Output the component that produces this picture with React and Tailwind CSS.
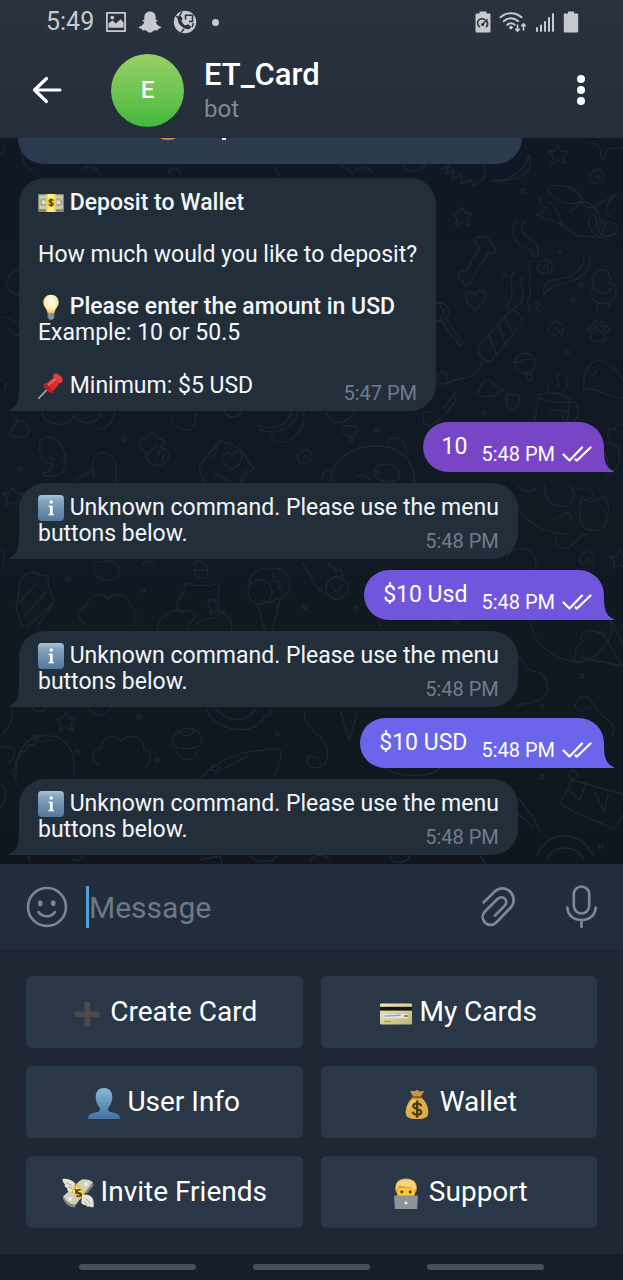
import React from "react";

/* ---------- Status bar icons ---------- */

function PictureIcon() {
  return (
    <svg viewBox="0 0 22 22" className="size-[22px]" aria-hidden="true">
      <path fillRule="evenodd" fill="#c6c9cd" d="M2 1h18a1 1 0 0 1 1 1v18a1 1 0 0 1-1 1H2a1 1 0 0 1-1-1V2a1 1 0 0 1 1-1Zm.8 1.8v16.4h16.4V2.8Z" />
      <path fill="#c6c9cd" d="M3.500 16.800V12.600l3.800-3 3.700 3 4.600-4.300 3 3.200v5.300Z" />
      <circle cx="7.300" cy="6.600" r="1.900" fill="#c6c9cd" />
    </svg>
  );
}

function GhostIcon() {
  return (
    <svg viewBox="0 0 24 22" className="h-[22px] w-6" aria-hidden="true">
      <path fill="#c6c9cd" d="M12 .4c3.600 0 5.700 2.600 5.700 5.900v2.500c.7.3 1.500-.2 1.800.4.4.8-.9 1.500-1.800 1.900.6 2.300 2.600 4.100 5 4.700.8.3.4 1.200-.3 1.500-1 .5-1.900.4-2.200.8-.3.500-.1 1.200-.7 1.300-1 .1-2-.3-3.200 0-1.500.500-2.400 2.200-4.300 2.200s-2.800-1.700-4.300-2.200c-1.200-.3-2.200.1-3.200 0-.6-.1-.4-.8-.7-1.300-.3-.4-1.200-.3-2.200-.8-.7-.3-1.100-1.200-.3-1.500 2.400-.6 4.400-2.400 5-4.700-.9-.4-2.200-1.100-1.800-1.900.3-.6 1.100-.1 1.800-.4V6.300C6.300 3 8.400.4 12 .4Z" />
    </svg>
  );
}

function CallBrowserIcon() {
  return (
    <svg viewBox="0 0 24 24" className="size-6" aria-hidden="true">
      <circle cx="12" cy="12" r="11.200" fill="#c6c9cd" />
      <path d="M9 1.500 6.800 5.500M3 6l2 2M8 22.500l3-3.500M20.500 13l-1.500 4" stroke="#29313f" strokeWidth="1.400" fill="none" />
      <path fill="none" stroke="#29313f" strokeWidth="1.500" strokeLinejoin="round" d="M12.500 9.500V5.200h7v6.300h-3.500" />
      <path fill="#29313f" d="M7 5 9.600 8.800 8.300 11c.8 1.900 2.300 3.500 4.200 4.500l2.300-1.300 3.500 2.600c-.6 1.600-2 2.600-3.700 2.400C9.300 18.600 4.700 13.500 4.600 8.500 4.700 6.900 5.500 5.600 7 5Z" />
    </svg>
  );
}

function PowerSaveIcon() {
  return (
    <svg viewBox="0 0 16 22" className="h-[22px] w-4" aria-hidden="true">
      <path fill="#c6c9cd" d="M4.500.5h7v2h3a1 1 0 0 1 1 1V20.500a1 1 0 0 1-1 1h-13a1 1 0 0 1-1-1V3.500a1 1 0 0 1 1-1h3Z" />
      <path fill="none" stroke="#29313f" strokeWidth="1.500" strokeLinecap="round" d="M4.500 15.800A4.300 4.300 0 0 1 9.500 8.500M12 10.500a4.300 4.300 0 0 1-.6 5.300M7.800 13.200 12 8.600" />
      <circle cx="7.700" cy="13.400" r="1.500" fill="#29313f" />
    </svg>
  );
}

function WifiIcon() {
  return (
    <svg viewBox="0 0 28 22" className="h-[22px] w-7" aria-hidden="true">
      <g fill="none" stroke="#c6c9cd" strokeWidth="2" strokeLinecap="round">
        <path d="M1.500 6.300C7.500.8 16.500.8 22.500 6.300M4.800 10.200c4.300-4 10-4 14.400 0M8.300 13.800c2.300-2 5-2 7.300 0" />
      </g>
      <circle cx="12" cy="16.600" r="1.800" fill="#c6c9cd" />
      <path fill="none" stroke="#c6c9cd" strokeWidth="1.700" d="M18.500 13.500v6.500M16.300 17.800l2.200 2.400 2.200-2.400M24.500 19.500V13M22.300 15.300l2.200-2.400 2.200 2.400" />
    </svg>
  );
}

function SignalIcon() {
  return (
    <svg viewBox="0 0 20 22" className="h-[22px] w-5" aria-hidden="true">
      <path fill="none" stroke="#c6c9cd" strokeWidth="2" strokeLinecap="round" d="M2 20v-3M6 20v-5.500M10 20v-9M14 20V7M18 20V3" />
    </svg>
  );
}

function BatteryIcon() {
  return (
    <svg viewBox="0 0 16 22" className="h-[22px] w-4" aria-hidden="true">
      <path fill="#c6c9cd" d="M5 .5h6v2h3.200a1 1 0 0 1 1 1V20.500a1 1 0 0 1-1 1H1.800a1 1 0 0 1-1-1V3.500a1 1 0 0 1 1-1H5Z" />
    </svg>
  );
}

/* ---------- Emoji ---------- */

function Emoji({ label, className, children }) {
  return (
    <svg viewBox="0 0 32 32" role="img" aria-label={label} className={className}>
      {children}
    </svg>
  );
}

const INLINE = "inline-block size-[26px] align-text-bottom";
const KEY = "mt-1 size-8 shrink-0";

function BanknoteEmoji() {
  return (
    <Emoji label="Dollar banknote" className={INLINE}>
      <rect x="0" y="5" width="32" height="22" rx="1" fill="#7f8a70" />
      <rect x="1.500" y="6.500" width="29" height="17" fill="#c9cdb4" />
      <circle cx="7" cy="15" r="5" fill="#a5ab90" />
      <circle cx="25" cy="15" r="5" fill="#a5ab90" />
      <circle cx="7" cy="15" r="2.500" fill="#dfe1d0" />
      <circle cx="25" cy="15" r="2.500" fill="#dfe1d0" />
      <rect x="10" y="5" width="12" height="22" fill="#f3d55b" />
      <rect x="12.500" y="5" width="7" height="22" fill="#fdeb95" />
      <circle cx="16" cy="15.500" r="5" fill="#f5c832" />
      <path d="M18.800 12.800c-.5-1.200-5-1.600-5 .7 0 2.400 5 1.500 5 4 0 2.300-4.700 2-5.500.4M16.200 10v11" fill="none" stroke="#4e4320" strokeWidth="1.500" />
    </Emoji>
  );
}

function BulbEmoji() {
  return (
    <Emoji label="Light bulb" className={INLINE}>
      <defs>
        <radialGradient id="bulb" cx=".5" cy=".4" r=".6">
          <stop offset="0" stopColor="#fffdf0" />
          <stop offset=".6" stopColor="#fdf0b4" />
          <stop offset="1" stopColor="#efc95e" />
        </radialGradient>
      </defs>
      <path fill="url(#bulb)" d="M16 1c5.700 0 9.500 4.200 9.500 9.300 0 5.400-4.500 7.700-5.200 13.200h-8.600C11 18 6.500 15.700 6.500 10.300 6.500 5.200 10.300 1 16 1Z" />
      <path fill="#9aa1a6" d="M12 23h8v6l-2 2.500h-4L12 29Z" />
      <path stroke="#666d73" strokeWidth="1" d="M12 25.500h8M12 28.200h8" />
    </Emoji>
  );
}

function PinEmoji() {
  return (
    <Emoji label="Pushpin" className={INLINE}>
      <path d="M13 18.500 1 31" stroke="#aeb4ba" strokeWidth="1.800" strokeLinecap="round" />
      <path fill="#b71f22" d="M6.500 13.500c3.500-2 7-1.200 9.500 1.400 2.600 2.600 3.500 6 1.500 9.600-2 1-4.700-1.200-7-3.500s-5-5-4-7.500Z" />
      <path fill="#d32f2f" d="m10.500 13 8.500-7.500 7.500 7.500-7.500 9Z" />
      <path fill="#e23d3b" d="M19.500 1.500c2.500-2 5.500-.5 8 2s4 5.500 2 8c-2 1.500-5.300.3-8-2.300-2.600-2.600-3.700-5.700-2-7.700Z" />
      <path d="m13 14.500 8-7" stroke="#f27570" strokeWidth="1.800" strokeLinecap="round" />
    </Emoji>
  );
}

function InfoEmoji() {
  return (
    <Emoji label="Information" className={INLINE}>
      <defs>
        <linearGradient id="info" x1="0" y1="0" x2="0" y2="1">
          <stop offset="0" stopColor="#a9c5da" />
          <stop offset=".2" stopColor="#86a6c0" />
          <stop offset="1" stopColor="#53779b" />
        </linearGradient>
      </defs>
      <rect x="0" y="0" width="32" height="32" rx="4.500" fill="url(#info)" />
      <circle cx="16.300" cy="8.700" r="2.200" fill="#fff" />
      <path fill="#fff" d="M13 13.300h5v10.200h1.800V25h-7v-1.500h1.900v-8.700H13Z" />
    </Emoji>
  );
}

function PlusEmoji() {
  return (
    <Emoji label="Plus" className={KEY}>
      <path fill="#4a4a49" d="M13.500 4h5.500v9.500h9.500V19H19v9.500h-5.500V19H4v-5.500h9.500Z" />
    </Emoji>
  );
}

function CardEmoji() {
  return (
    <Emoji label="Credit card" className={KEY}>
      <defs>
        <linearGradient id="card" x1="0" y1="0" x2="1" y2="1">
          <stop offset="0" stopColor="#f0e9b8" />
          <stop offset="1" stopColor="#bdb477" />
        </linearGradient>
      </defs>
      <rect x="0" y="5.500" width="32" height="21" rx="1.200" fill="url(#card)" />
      <rect x="0" y="8.800" width="32" height="3.800" fill="#15140f" />
      <rect x="3" y="16" width="25" height="4.200" fill="#e3e6e2" />
      <path d="M4 18.500c1.200-2 2 1 3.200-.5s2 1.200 3.200-.2 2 1 3.200-.2 2 1 3.200-.3 2.200.8 4 0" fill="none" stroke="#7fa3c8" strokeWidth="1.200" />
      <path d="M24 18h4" stroke="#8a3f3f" strokeWidth="1.300" />
      <path d="M4 23.500h7" stroke="#9b9560" strokeWidth="1" />
    </Emoji>
  );
}

function PersonEmoji() {
  return (
    <Emoji label="Person" className={KEY}>
      <defs>
        <linearGradient id="person" x1="0" y1="0" x2="0" y2="1">
          <stop offset="0" stopColor="#8cb8d8" />
          <stop offset="1" stopColor="#3f73a3" />
        </linearGradient>
      </defs>
      <path fill="url(#person)" d="M16 0c5 0 8.300 3.400 8.300 8.800 0 4.500-1.500 8.700-4 10.600v3.300c1.500 1.700 6.400 1.700 9.300 3.300 1.700 1 2.400 2.700 2.400 5H0c0-2.300.7-4 2.400-5 2.900-1.600 7.800-1.600 9.300-3.300v-3.300c-2.500-1.900-4-6.100-4-10.600C7.700 3.400 11 0 16 0Z" />
    </Emoji>
  );
}

function MoneyBagEmoji() {
  return (
    <Emoji label="Money bag" className={KEY}>
      <path fill="#c9973f" d="M9 3.500c2-2 3.500.8 5-.5s2.500-1.500 4 0 3.500-1 5 .5l-4 6h-6Z" />
      <path fill="#dcae45" d="M12.500 9h7c4.500 3 7.800 9 7.800 15 0 5.500-3 7-11.300 7S4.700 29.500 4.700 24c0-6 3.300-12 7.800-15Z" />
      <path fill="#efcf76" d="M12 11.500c-3 3-4.800 7-5 12 2-6 4.500-9 8-11Z" />
      <path stroke="#8a5a24" strokeWidth="2" strokeLinecap="round" d="M11.500 9.200h9" />
      <path d="M20 17.300c-1-2.500-7.700-2.700-7.700.8 0 3.700 8 2.200 8 6 0 3.500-7 3.500-8.300.5M16.200 13.300V29" fill="none" stroke="#453313" strokeWidth="2.100" strokeLinecap="round" />
    </Emoji>
  );
}

function FlyingMoneyEmoji() {
  return (
    <Emoji label="Money with wings" className={KEY}>
      <path fill="#cfd0bd" d="m1 18.500 17-16c4-2 9-1.500 13 2L13.500 27C8 27 4 23.500 1 18.500Z" />
      <path fill="#87886f" d="M1 18.500c3 5 7 8.500 12.500 8.500l-.5 2.500C8 29.500 3 26 1 21ZM31 4.500l.5 3L25 15.500l-1.500-1.300Z" />
      <path fill="#f0c43c" d="m8.500 12.500 6.500-6.500 8.500 8.500-6 7.500Z" />
      <path fill="#f8e08a" d="m11 13.500 4.500-4.500 5 5-4 5.500Z" />
      <path d="M18.500 12.500c-1.500-2-5.500.3-4.500 2.300s4-1.300 5 .8-2.800 3.500-4.500 2M13 11l7 7.500" fill="none" stroke="#4f4115" strokeWidth="1.500" />
      <circle cx="24" cy="6" r="2" fill="#efeee2" />
      <circle cx="8" cy="21" r="2" fill="#efeee2" />
      <path fill="#e9e5d4" d="M.5 1c4.500-.7 10 1 13 4.500L9 14C5.500 13.500 4.500 11.500 5.500 10 3 9.500 2 7.500 3 6.200 1.300 5 .5 3 .5 1ZM20 17.500c4.500-2.500 9.500.5 11 3.500.8 3 .8 5.500.6 8-1.800.7-3.200.2-4-.8-1.500 1-3.200.4-3.800-1.200-2 .5-4-1-4.500-2.500Z" />
      <path d="m4.500 5 6 3M6.500 9l4 1.500M24 20.500l5 6M22 23l3.500 4" stroke="#a9a38d" strokeWidth="1" />
    </Emoji>
  );
}

function TechnologistEmoji() {
  return (
    <Emoji label="Technologist" className={KEY}>
      <path fill="#e09f35" d="M5.500 13C4 5 9 .5 16 .5S28.500 5 26.500 13L24 17H8Z" />
      <path fill="#fbc93c" d="M7.500 10h17v6c0 3.500-3 6-8.500 6s-8.500-2.500-8.500-6Z" />
      <path fill="#f7d283" d="M6 11.500C5 4.500 10 1.200 16 1.200s11 3.300 10 10.300c-1.500 0-3.500-.8-5-2.500C17 9 11 8.500 9 7c-.5 2-1.500 4-3 4.500Z" />
      <circle cx="11.800" cy="14" r="1.400" fill="#4b3419" />
      <circle cx="20.200" cy="14" r="1.400" fill="#4b3419" />
      <path fill="#2a38a5" d="M3.500 31c0-2.500.5-5 2.500-6h20c2 1 2.500 3.500 2.500 6Z" />
      <path fill="#8f9297" d="M4 18.500a1 1 0 0 1 1-1h22a1 1 0 0 1 1 1L27 31H5Z" />
      <circle cx="16" cy="25" r="1.600" fill="#e8e9eb" />
    </Emoji>
  );
}

/* ---------- Wallpaper ---------- */

function Wallpaper() {
  return (
    <svg
      viewBox="0 138 623 726"
      preserveAspectRatio="xMidYMin slice"
      aria-hidden="true"
      className="absolute inset-0 h-full w-full"
    >
      <defs>
        <path id="star" d="m0-10 3 6 7 .5-5 5 2 7.500L0 5l-6.500 4 1.200-7.300L-10-3l6.500-1Z" />
        <path id="swirl" d="M0 1c-2-3 3-5 4-1S-1 7-5 3-4-8 2-8 10 0 6 5" />
        <path id="heart" d="M0 9C-6 5-11 0-9-5s7-4 9 0c2-5 8-6 10-1S5 6 0 9Z" />
        <circle id="dot" r="2" />
        <g id="paw">
          <path d="M-6 8c-4-3 2-9 5-10s9 5 8 9-5 1-7 2-4 1-6-1Z" />
          <ellipse cx="-8" cy="-3" rx="2" ry="3" />
          <ellipse cx="-3" cy="-8" rx="2" ry="3" />
          <ellipse cx="4" cy="-8" rx="2" ry="3" />
          <ellipse cx="9" cy="-3" rx="2" ry="3" />
        </g>
        <path id="cloud" d="M-24 14c-10-4-9-17 1-18 1-12 14-15 20-7 9-9 24-3 23 8 9 3 8 16-1 19" />
      </defs>
      <g fill="none" stroke="#1d2731" strokeWidth="1.300" strokeLinecap="round" strokeLinejoin="round">
        <use href="#star" x="558" y="155" />
        <use href="#star" x="462" y="217" />
        <use href="#star" x="13" y="497" />
        <use href="#star" x="66" y="722" />
        <use href="#star" x="620" y="560" />
        <use href="#swirl" x="596" y="178" />
        <use href="#swirl" x="544" y="268" />
        <use href="#swirl" x="555" y="330" />
        <use href="#swirl" x="586" y="560" />
        <use href="#swirl" x="304" y="458" />
        <use href="#heart" x="475" y="300" />
        <use href="#heart" x="232" y="461" />
        <use href="#paw" x="598" y="332" />
        <use href="#cloud" x="110" y="610" />
        <use href="#cloud" x="124" y="752" />
        {[
          [523, 191], [560, 252], [581, 285], [573, 300], [567, 352], [484, 413], [377, 430], [351, 440],
          [124, 439], [20, 469], [68, 579], [143, 590], [305, 607], [139, 717], [35, 737], [77, 752],
          [277, 734], [157, 760], [356, 609], [542, 777], [601, 846], [542, 706], [582, 676], [505, 275],
        ].map(([x, y]) => (
          <use key={x + "-" + y} href="#dot" x={x} y={y} />
        ))}
        {/* starfish, crescent and hedgehog */}
        <path d="M586 142c6 3 12 0 14 6 2 6 0 10 3 11s2-8 6-10 9 0 14-2M492 181c18 0 32-9 37-26 5 18-6 26-37 26M441 169l8-3-4 8 9-4-2 9 9-4 1 9 8-5 4 7 6-5c8-3 4-15 4-22M338 160c4 10 10 6 14 14 6-9 14-8 20-2M400 160c4 14 18 14 26 4" />
        {/* skipping cat */}
        <path d="M547 188c8-6 32-2 35 12-6 8-30 2-35-12ZM541 197c-3 6 0 10 6 10l-10 8 24 9 16 12c12-2 22 6 38-2M570 212l12-10c10 0 16 8 19 20M583 205c8 8 14-2 34-11-8 6-14 12-8 22M548 202c8 4 12 14 14 24M590 217c4-4 8 0 6 8 8-10 14-4 4 12-9-4-14-12-10-20Z" />
        <ellipse cx="608" cy="229" rx="10" ry="7" />
        {/* bone */}
        <path d="M481 237c-8-2-8 8-1 10l-14 24c-8-2-11 6-4 9 0 8 10 6 10-1l16-26c8 3 11-5 4-8-1-7-9-10-11-8Z" />
        {/* ribbons */}
        <path d="M518 219c-7 6-7 20 2 26 8 4 12 4 12 11h6c2-14-8-16-14-22-4-6-2-10 1-14M584 256c0 14-10 22-30 24-10 2-12 8-10 14 6-8 12-8 24-12 18-4 22-14 22-26M515 271c-8 6-2 14-3 24-2 8-6 10-4 14M523 275c-6 8 2 14 0 22-2 8-8 10-10 12M530 260c-5 8 3 12 0 20s4 10-1 18 4 8 0 14M534 302l6 2-5 4 5 3" />
        {/* duck */}
        <path d="M594 286c-3-8 1-16 8-16s11 8 6 13c12-2 10 18-2 20-12 2-20-8-12-17Zm4 18-1 5m10-6 3 4M594 288c6 6 12 8 18 0" />
        {/* lollipop */}
        <circle cx="440" cy="312" r="9" />
        <path d="M438 305c6 2 8 8 2 14M442 322l18 24 3-2-16-24" />
        {/* cracker */}
        <path d="m479 346 31-35c6-2 14 6 12 13l-30 36c-6 4-16-6-13-14Zm10-12 8 22m1-32 8 22m-1-30 9 20M482 360c-2 22-22 16-38 24-8 0-8-10-2-12 6 0 6 8 2 12h-12" />
        {/* candies */}
        <path d="M514 362c4-12 22-12 21 2-1 12-18 14-21-2Zm0 0c8 2 10-6 18-2M527 374l-1 6h6l-1-7M483 382c8-6 10 4 16 6 0 6-2 8-8 8-8 0-12 2-14-2 2-6 6-8 6-12Zm16 8c6-2 10 6 8 10M506 400c-2-8 8-6 14-4-2 6 0 12-8 14-4-2-6-6-6-10Z" />
        {/* mug */}
        <path d="M538 395c8-4 26-2 32 4l-3 28M538 395l-3 26M538 397c8 6 24 6 32 4M571 402c10-2 8 16 3 20M548 392v-7M556 388c8-6-4-8 4-16M564 390c8-8-2-8 4-14M550 410l18 1-6 5 4 8" />
        {/* whale */}
        <path d="M584 390c-2-14 4-28 14-30 12 4 20 10 25 20M584 390c12-4 24 8 39 8M589 374c4 2 6 0 8-4" />
        {/* wrench */}
        <path d="M430 412c-8-2-10 10-2 14 8-2 12-8 16-10l12-16c-4-4-2-8 2-8M444 408l10-14" />
        {/* insect */}
        <path d="M609 440c-4-8 2-14 6-10 0-6 6-8 8-4M606 444c8-4 14 4 14 12s-6 18-14 20M600 452c8 2 10 12 6 20" />
        {/* bear */}
        <path d="M330 484c2-26 24-38 46-38 24 0 40 14 38 38M386 444c4-10 22-8 20 10M322 480c0-8 6-12 11-9" />
        <path d="M374 472c2-12 24-10 26 4 0 8-26 8-26-4ZM354 478c4-4 12-4 16 2" />
        <circle cx="378" cy="472" r="1" />
        <path d="M327 412c2 16 20 12 26 2 2-6 10-4 10-4M342 430c0-6 14-6 16 0-2 8-14 8-16 0Z" />
        {/* bananas */}
        <path d="M258 425c14 6 28 2 34-14M258 425c2 8 18 10 30 2 8-6 10-12 10-16M272 440c16 8 34-8 32-28M272 440v-6" />
        {/* fish */}
        <path d="M199 468c8-14 14-20 22-28l5 3c12 2 20 12 24 22l5 3-6 4c-8 8-8 14-10 18M199 468c2 8 4 12 8 16M241 480l7-13M209 453c0 6 4 4 8-2 2-8-4-2-8 2M215 480c-3-6 4-8 6-2 6-2 6 2 4 6" />
        {/* cupcake */}
        <path d="M142 449c-6-6 0-12 4-10 0-8 12-8 12 0 8-2 8 8 2 8 4 4 12 2 9 9-4 14-22 12-23-2-1-6-4 0-4-5Zm6 6c-2-4 8-4 8-10M156 460l4-10M162 461l3-8" />
        {/* shrimp, boot, dove and leaf */}
        <path d="M42 472c6 2 12-2 10-8-10-2-14-12-12-22 4-8 18-6 22 6 8 14 4 28-10 28-6 0-10 0-10-4ZM50 456c0 6 4 6 4 2M62 456c0 6 2 6 4 2M94 478c-2-10-2-22 4-24 8-4 16 2 18 12v16M73 481l20-11M9 434c6-12 10-10 6-14 8 0 16 6 14 12-2 8-14 6-20 2ZM42 412c0 14 30 18 32 2M76 418c8 8 22 6 26-6M98 428c8 4 16-8 17-16M172 416c-2 10 12 16 18 14 6-4 6-12 6-18M225 411c2 8 14 8 17 0" />
        {/* left edge */}
        <path d="M3 146c4 4 0 6-3 8M19 270c-6-2-14 10-12 16 2 8 10 6 12 10M2 316l17 7M10 330c4 4 6 6 9 5M0 378c8 4 8 6 4 12M20 140c4 16 0 26 14 32M82 170c4-6 14-4 18 4M168 174c2-8 10-8 12 0M275 168l6 10M0 548c4 2 6 8 2 16" />
        {/* popcorn bag */}
        <path d="M23 628l-7-20 4-22c-4-6 4-6 4-10 6-6 14-4 16 0 8-4 10 4 8 8l6 18-18 26M20 602l16-18M24 616l22-24M28 626l24-22" />
        <path d="M94 570c-2-8 6-10 10-8 6-4 18 4 15 12-6 10-22 8-25-4ZM142 566c2-6 10-6 12-2M194 572c-2-8 4-14 6-10 6 0 8 8 8 14-4 4-12 2-14-4Zm0-2h13" />
        {/* cuddling bear */}
        <path d="M157 630c2-12 8-18 20-20-2-10 4-14 8-18-4-6 4-12 8-6 8-2 14 0 18 0 8-6 12 4 6 8 4 8 2 14 0 18 10 0 16 8 14 18M177 610c6 6 14-6 18 6-2 8-8 8-8 14M208 600h7l4 10-8 4ZM197 624c8-10 16 0 28-14" />
        {/* ice cream */}
        <circle cx="260" cy="592" r="12" />
        <path d="M249 586c0-14 12-20 20-16 14-6 24 8 20 18 0 8-8 12-12 10-6 6-10 4-14 4M272 574c4 4-2 8 8 8 2 4-4 6 2 8M257 604l8 26M280 600l-8 30" />
        {/* comet */}
        <circle cx="337" cy="588" r="11" />
        <path d="M331 586l6 6 5-7M302 562c4 10 10 12 12 22 4 4 8 10 14 12M328 562l2 6 4-2 2 6 5-3 2 8" />
        {/* octopus and cat toy */}
        <path d="M516 500c4 20 24 32 50 34M518 486c4 6 12 8 18 2M545 484c-2 16 8 24 22 22 8-6 10-14 2-22M552 522c4-6 10-4 14-10 8 2 6 8 0 10M557 534c-4 16 8 18 16 10 6-2 6-10 14-10M582 498l8 4 14-6 5 12-4 18c-8 6-18 6-24-2l-2-14ZM592 512h3M602 510h3M577 490c10-6 20 2 14 8" />
        {/* globe with balloon strings */}
        <path d="M506 560c2-14 28-18 30 4 0 6-2 8-2 8M530 622c4 24 26 40 52 40 18-6 34-22 28-42M573 660c6-6-2-12 10-18-6-6 2-10 6-12l16 4M600 630l23 36M582 658l41 8M612 622l11 22" />
        <path d="M516 655c14 8 4 14 18 16 12 2 18 18 10 26-12 10-26 4-26 10M575 706c2-10 10-12 14-8 6 8 8 14 14 18 10 8 16 14 8 20M575 706c4 6 10 6 14 0" />
        <path d="M341 712l8 28 8-26M378 620l14 30M438 620c6-4 16-2 20 4M384 768c20 12 50 8 56 0" />
        {/* dinosaur, seal, mushroom, rocket */}
        <path d="M16 780c-2-36 16-46 34-44 16 0 26 14 24 40M14 776l-3-6 5-3-1-7 5-2 0-6 6-1 2-6 6 0 3-5 6 2 5-3 5 3M0 784c8 4 8 14 0 24M0 748c14-4 20 4 8 16M12 706c2 12-4 24-10 28" />
        <circle cx="64" cy="768" r="1" />
        <path d="M172 742c2-18 30-18 30 0 0 8-30 10-30 0Zm4 8c2 12 18 14 22 0M180 732c4 6 12 4 14-2M206 708c4 20 48 34 60 6 4 6 6-2 3-8M215 708c12 14 30 16 40 2M198 780c20-20 40-28 66-30 20-4 18 0 16 12l-6 16M214 774l34-18M211 768c2-4 10-4 8 0-2 4-8 4-8 0M305 712c-6 14 20 22 22 38 4 20-18 22-20 12-2-8 12-8 14 2" />
        <path d="M88 706c4 12 16 12 24 0M31 706c4 8 12 8 16 0" />
        {/* parcel and lower edge */}
        <path d="M560 803l12-23 50 14M560 803c8 8 32 16 54 26l9-14M568 790l12 10 6-16M594 790l10 22 4-18M518 798c10 12 16 18 22 34M516 812l16 14M537 856c10-28 46-26 56 0M546 860c8-16 30-16 38 0M30 860l-4-8M72 858c6 6 12 0 12-6M200 860l20-4 2 8M250 856c8 8 24 6 26 0M310 862c4-8 12-8 20-4M390 856c4 10 18 8 20-2M480 856l6 8" />
        <circle cx="573" cy="775" r="4" />
      </g>
    </svg>
  );
}

/* ---------- Chat ---------- */

function Incoming({ lastLine, time, children }) {
  return (
    <article className="relative w-fit max-w-full self-start rounded-[26px] rounded-bl-none bg-[#222e3a] px-[19px] py-3 text-[23px] leading-[26px] text-[#f3f6f9]">
      <svg viewBox="0 0 10 26" aria-hidden="true" className="absolute right-full bottom-0 h-[26px] w-[10px]">
        <path fill="#222e3a" d="M10 4c0 12-2.500 18-9.500 21-.8.4-.5 1 .5 1h9Z" />
      </svg>
      {children}
      <div className="flex items-start justify-between gap-4">
        <p>{lastLine}</p>
        <time className="mt-[7px] -mb-[7px] shrink-0 text-[20px] text-[#6f7d8b]">{time}</time>
      </div>
    </article>
  );
}

function Outgoing({ text, time, tone, tail }) {
  return (
    <article className={`relative flex w-fit gap-[14px] self-end rounded-[25px] rounded-br-none py-3 pr-3 pl-[19px] text-[23px] leading-[26px] text-white ${tone}`}>
      <p>{text}</p>
      <div className="mt-[7px] -mb-[7px] flex items-center gap-[7px] text-[20px]">
        <time>{time}</time>
        <svg viewBox="0 0 30 18" role="img" aria-label="Read" className="h-[18px] w-[30px]">
          <path d="m1.500 9.500 6 6L20 2.500M13.500 14.500l1.500 1L28.500 2.500" fill="none" stroke="#fff" strokeWidth="2.200" strokeLinecap="round" strokeLinejoin="round" />
        </svg>
      </div>
      <svg viewBox="0 0 10 26" aria-hidden="true" className={`absolute bottom-0 left-full h-[26px] w-[10px] ${tail}`}>
        <path d="M0 4c0 12 2.500 18 9.500 21 .8.4.5 1-.5 1H0Z" />
      </svg>
    </article>
  );
}

function UnknownCommand() {
  return (
    <Incoming lastLine="buttons below." time="5:48 PM">
      <p>
        <InfoEmoji /> Unknown command. Please use the menu
      </p>
    </Incoming>
  );
}

function KeyButton({ icon, children }) {
  return (
    <button type="button" className="flex h-[72px] items-center justify-center gap-[7px] rounded-md bg-[#293746] text-[28px] text-white">
      {icon}
      <span>{children}</span>
    </button>
  );
}

export default function App() {
  return (
    <div className="flex min-h-screen flex-col overflow-hidden bg-[#1e2733] font-['Roboto',sans-serif]">
      <header className="bg-linear-to-b from-[#2a3240] to-[#242e39] pb-[11px]">
        <div className="flex h-11 items-center justify-between pr-11 pl-[46px]">
          <div className="flex items-center gap-[11px]">
            <time className="text-[25px] text-[#c6c9cd]">5:49</time>
            <PictureIcon />
            <GhostIcon />
            <CallBrowserIcon />
            <span className="ml-1 size-[7px] rounded-full bg-[#c6c9cd]" />
          </div>
          <div className="flex items-center gap-2">
            <PowerSaveIcon />
            <WifiIcon />
            <SignalIcon />
            <BatteryIcon />
          </div>
        </div>
        <div className="flex h-[83px] items-center pt-[9px] pr-7 pl-8">
          <button type="button" aria-label="Back" className="size-[30px]">
            <svg viewBox="0 0 30 30" className="size-[30px]" aria-hidden="true">
              <path d="M2.500 15H28M14.500 3.500 2.500 15l12 11.500" fill="none" stroke="#fff" strokeWidth="3.200" strokeLinecap="round" strokeLinejoin="round" />
            </svg>
          </button>
          <span className="ml-[49px] flex size-[73px] shrink-0 items-center justify-center rounded-full bg-linear-to-b from-[#98d068] to-[#3fb93c] text-[24px] font-medium text-white">
            E
          </span>
          <div className="ml-5 flex-1 pt-[2px]">
            <h1 className="text-[31px] leading-9 font-medium text-white">ET_Card</h1>
            <p className="text-[24px] leading-8 text-[#7d8b99]">bot</p>
          </div>
          <button type="button" aria-label="More options" className="flex w-7 flex-col items-center gap-[3px]">
            <span className="size-2 rounded-full bg-white" />
            <span className="size-2 rounded-full bg-white" />
            <span className="size-2 rounded-full bg-white" />
          </button>
        </div>
      </header>

      <main className="relative overflow-hidden bg-linear-to-b from-[#101826] via-[#111a22] to-[#0f161e]">
        <Wallpaper />
        <div className="relative flex flex-col gap-[11px] px-[19px] pb-[9px]">
          <div className="mb-[3px] -ml-px h-[26px] w-[504px] max-w-full rounded-b-[26px] bg-[#2c3a4f]">
            <svg viewBox="0 0 504 26" aria-hidden="true" className="h-[26px] w-full">
              <path d="M142 0h16c-3 2.500-13 2.500-16 0Z" fill="#c98c3c" />
              <path d="M204 0h4v2h-4Z" fill="#e8ebef" />
            </svg>
          </div>

          <Incoming
            time="5:47 PM"
            lastLine={
              <>
                <PinEmoji /> Minimum: $5 USD
              </>
            }
          >
            <div className="flex flex-col gap-[26px] pb-[27px]">
              <p className="font-medium">
                <BanknoteEmoji /> Deposit to Wallet
              </p>
              <p>How much would you like to deposit?</p>
              <p>
                <BulbEmoji /> <strong className="font-medium">Please enter the amount in USD</strong>
                <br />
                Example: 10 or 50.5
              </p>
            </div>
          </Incoming>

          <Outgoing text="10" time="5:48 PM" tone="bg-[#7745c6]" tail="fill-[#7745c6]" />
          <UnknownCommand />
          <Outgoing text="$10 Usd" time="5:48 PM" tone="bg-[#7155dc]" tail="fill-[#7155dc]" />
          <UnknownCommand />
          <Outgoing text="$10 USD" time="5:48 PM" tone="bg-[#6b65ec]" tail="fill-[#6b65ec]" />
          <UnknownCommand />
        </div>
      </main>

      <form className="flex h-[86px] items-center bg-[#212d3b] pr-6 pl-[26px]" onSubmit={(event) => event.preventDefault()}>
        <button type="button" aria-label="Emoji" className="shrink-0">
          <svg viewBox="0 0 42 42" className="size-[42px]" aria-hidden="true">
            <circle cx="21" cy="21" r="19" fill="none" stroke="#7a8794" strokeWidth="2.600" />
            <ellipse cx="14.300" cy="17.300" rx="2.300" ry="3" fill="#7a8794" />
            <ellipse cx="27.200" cy="17.300" rx="2.300" ry="3" fill="#7a8794" />
            <path d="M12.500 26c4 5.600 12.500 5.600 16.500 0" fill="none" stroke="#7a8794" strokeWidth="2.600" strokeLinecap="round" />
          </svg>
        </button>
        <input
          type="text"
          aria-label="Message"
          placeholder="Message"
          className="ml-[18px] h-[42px] min-w-0 flex-1 border-l-3 border-[#4fa0dc] bg-transparent text-[30px] text-white outline-none placeholder:text-[#6d7986]"
        />
        <button type="button" aria-label="Attach file" className="shrink-0">
          <svg viewBox="0 0 38 42" className="h-[42px] w-[38px]" aria-hidden="true">
            <path d="M3.500 16.500 14.500 5.800c5-4.800 12-4.300 16 .2 4.300 4.700 4.300 11.300-.3 16L16.500 36.200c-3.500 3.500-8.500 3.500-11.500.3-3.200-3.300-3-8 .4-11.500L17.500 13c2.300-2.300 5.300-2.300 7.300-.3s1.900 5-.3 7.200L15 29.500" fill="none" stroke="#7a8794" strokeWidth="2.700" strokeLinecap="round" />
          </svg>
        </button>
        <button type="button" aria-label="Record voice message" className="ml-[47px] shrink-0">
          <svg viewBox="0 0 34 46" className="h-[46px] w-[34px]" aria-hidden="true">
            <g fill="none" stroke="#7a8794" strokeWidth="2.700" strokeLinecap="round">
              <rect x="8.800" y="2.500" width="15.400" height="27" rx="7.700" />
              <path d="M2.300 23.500c.5 8 6.500 12.500 14.200 12.500s13.700-4.500 14.200-12.500M16.500 36v7" />
            </g>
          </svg>
        </button>
      </form>

      <section aria-label="Bot menu" className="grid grid-cols-2 gap-[18px] border-t border-[#1a2430] px-[26px] pt-[25px] pb-[26px]">
        <KeyButton icon={<PlusEmoji />}>Create Card</KeyButton>
        <KeyButton icon={<CardEmoji />}>My Cards</KeyButton>
        <KeyButton icon={<PersonEmoji />}>User Info</KeyButton>
        <KeyButton icon={<MoneyBagEmoji />}>Wallet</KeyButton>
        <KeyButton icon={<FlyingMoneyEmoji />}>Invite Friends</KeyButton>
        <KeyButton icon={<TechnologistEmoji />}>Support</KeyButton>
      </section>

      <nav aria-label="System navigation" className="flex h-[26px] items-center justify-center gap-[57px] bg-[#171e28]">
        <button type="button" aria-label="Recents" className="h-[6px] w-[117px] rounded-full bg-[#484e57]" />
        <button type="button" aria-label="Home" className="h-[6px] w-[117px] rounded-full bg-[#484e57]" />
        <button type="button" aria-label="Back" className="h-[6px] w-[117px] rounded-full bg-[#484e57]" />
      </nav>
    </div>
  );
}
